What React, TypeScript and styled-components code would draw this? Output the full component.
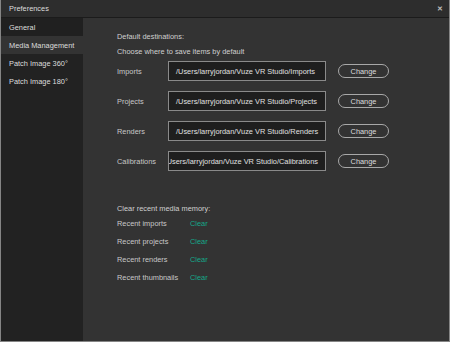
import React from 'react';
import styled, { createGlobalStyle } from 'styled-components';

const GlobalStyle = createGlobalStyle`
  html, body {
    margin: 0;
    padding: 0;
    background: #333333;
  }
  body {
    font-family: "Liberation Sans", Arial, sans-serif;
    font-size: 7.4px;
  }
`;

const sections = ['General', 'Media Management', 'Patch Image 360°', 'Patch Image 180°'];

const destinations = [
  { label: 'Imports', path: '/Users/larryjordan/Vuze VR Studio/Imports' },
  { label: 'Projects', path: '/Users/larryjordan/Vuze VR Studio/Projects' },
  { label: 'Renders', path: '/Users/larryjordan/Vuze VR Studio/Renders' },
  { label: 'Calibrations', path: '/Users/larryjordan/Vuze VR Studio/Calibrations', scrolled: true },
];

const recents = ['Recent imports', 'Recent projects', 'Recent renders', 'Recent thumbnails'];

const App = () => {
  return (
    <Window>
      <GlobalStyle />
      <TitleBar>
        <Title>Preferences</Title>
        <Close>✕</Close>
      </TitleBar>
      <Body>
        <Sidebar>
          {sections.map((s, i) => (
            <NavItem key={s} $active={i === 1} $first={i === 0}>
              {s}
            </NavItem>
          ))}
        </Sidebar>
        <Content>
          <Heading>Default destinations:</Heading>
          <SubHeading>Choose where to save items by default</SubHeading>
          <DestList>
            {destinations.map((d) => (
              <DestRow key={d.label}>
                <Label>{d.label}</Label>
                <PathBox $scrolled={!!d.scrolled}>
                  <PathText>{d.path}</PathText>
                </PathBox>
                <ChangeButton>Change</ChangeButton>
              </DestRow>
            ))}
          </DestList>
          <Heading $top={33}>Clear recent media memory:</Heading>
          <RecentList>
            {recents.map((r) => (
              <RecentRow key={r}>
                <RecentLabel>{r}</RecentLabel>
                <ClearLink>Clear</ClearLink>
              </RecentRow>
            ))}
          </RecentList>
        </Content>
      </Body>
    </Window>
  );
};

export default App;

const Window = styled.div`
  width: 450px;
  height: 342px;
  box-sizing: border-box;
  border: 1px solid #858585;
  border-top: none;
  display: flex;
  flex-direction: column;
  background: #333333;
  overflow: hidden;
`;

const TitleBar = styled.div`
  height: 17px;
  flex-shrink: 0;
  display: flex;
  flex-direction: row;
  justify-content: space-between;
  align-items: center;
  padding: 0 6px 0 8px;
  background: #2d2d2d;
  border-bottom: 1px solid #1b1b1b;
`;

const Title = styled.div`
  color: #dddddd;
  font-size: 7.4px;
`;

const Close = styled.div`
  color: #bbbbbb;
  font-size: 7px;
  font-weight: bold;
`;

const Body = styled.div`
  flex: 1;
  display: flex;
  flex-direction: row;
  min-height: 0;
`;

const Sidebar = styled.div`
  width: 82px;
  flex-shrink: 0;
  background: #222222;
  display: flex;
  flex-direction: column;
`;

const NavItem = styled.div<{ $active: boolean; $first: boolean }>`
  height: 18px;
  display: flex;
  align-items: center;
  padding-left: 8px;
  color: #dddddd;
  background: ${(p) => (p.$active ? '#333333' : p.$first ? '#202020' : 'transparent')};
`;

const Content = styled.div`
  flex: 1;
  display: flex;
  flex-direction: column;
  padding: 14px 0 0 34px;
`;

const Heading = styled.div<{ $top?: number }>`
  height: 10px;
  line-height: 10px;
  margin-top: ${(p) => p.$top ?? 0}px;
  color: #d0d0d0;
`;

const SubHeading = styled.div`
  height: 10px;
  line-height: 10px;
  margin-top: 5px;
  color: #d0d0d0;
`;

const DestList = styled.div`
  display: flex;
  flex-direction: column;
  gap: 10px;
  margin-top: 4px;
`;

const DestRow = styled.div`
  display: flex;
  flex-direction: row;
  align-items: center;
  height: 20px;
`;

const Label = styled.div`
  width: 51px;
  color: #c8c8c8;
`;

const PathBox = styled.div<{ $scrolled: boolean }>`
  width: 158px;
  height: 20px;
  box-sizing: border-box;
  border: 1px solid #8a8a8a;
  background: #1e1e1e;
  display: flex;
  align-items: center;
  justify-content: ${(p) => (p.$scrolled ? 'flex-end' : 'flex-start')};
  padding: 0 7px;
  overflow: hidden;
`;

const PathText = styled.span`
  color: #e0e0e0;
  white-space: nowrap;
  flex-shrink: 0;
`;

const ChangeButton = styled.div`
  margin-left: 12px;
  width: 51px;
  height: 14px;
  box-sizing: border-box;
  border: 1px solid #a8a8a8;
  border-radius: 8px;
  display: flex;
  align-items: center;
  justify-content: center;
  color: #dddddd;
`;

const RecentList = styled.div`
  display: flex;
  flex-direction: column;
`;

const RecentRow = styled.div`
  height: 18px;
  display: flex;
  flex-direction: row;
  align-items: center;
`;

const RecentLabel = styled.div`
  width: 73px;
  color: #c8c8c8;
`;

const ClearLink = styled.div`
  color: #15a88a;
`;
